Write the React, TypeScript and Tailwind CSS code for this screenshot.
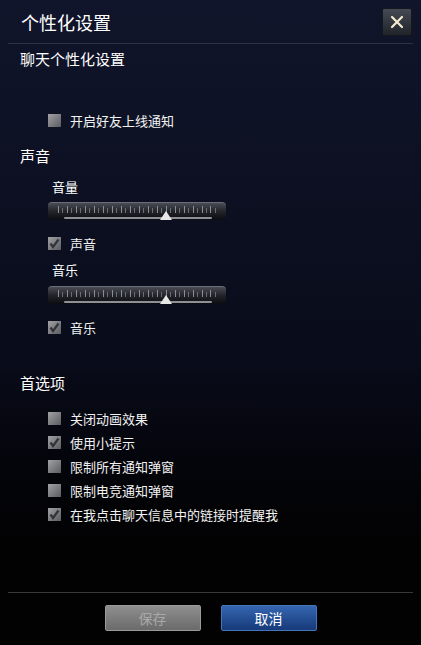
import React from "react";

const font = { fontFamily: '"Noto Sans CJK SC", "Noto Sans", sans-serif' };

function Check({ checked }: { checked?: boolean }) {
  return (
    <div className="relative w-[13px] h-[13px] bg-gradient-to-br from-[#a3a3a6] to-[#5b5c60] shrink-0">
      {checked && (
        <svg viewBox="0 0 13 13" className="absolute inset-0 w-[13px] h-[13px]">
          <path d="M2.5 6.5 L5 10 L10.5 2.5" fill="none" stroke="#33343a" strokeWidth="2.2" />
        </svg>
      )}
    </div>
  );
}

function CheckRow({ label, checked }: { label: string; checked?: boolean }) {
  return (
    <div className="h-[20px] flex items-center pl-[28px]">
      <Check checked={checked} />
      <span className="ml-[9px] text-[13px] text-[#f2f2f2] leading-none">{label}</span>
    </div>
  );
}

function Slider() {
  const ticks = Array.from({ length: 36 });
  return (
    <div className="ml-[28px] w-[178px] h-[18px] rounded-[4px] bg-gradient-to-b from-[#4a4d55] via-[#22242a] to-[#0b0c10] border-t border-[#6a6d75] relative">
      <div className="absolute left-[10px] right-[10px] top-[2px] h-[8px] flex justify-between items-end">
        {ticks.map((_, i) => (
          <div key={i} className={i % 2 === 0 ? "w-px h-[7px] bg-[#8a8d94]" : "w-px h-[5px] bg-[#6a6d74]"} />
        ))}
      </div>
      <div className="absolute left-[16px] right-[14px] top-[14px] h-[2px] bg-[#8d9096] rounded-full" />
      <svg viewBox="0 0 12 9" className="absolute left-[112px] top-[8px] w-[12px] h-[9px]">
        <path d="M6 0 L12 9 L0 9 Z" fill="#e6e6e6" />
      </svg>
    </div>
  );
}

export default function App() {
  return (
    <div
      style={font}
      className="w-[421px] h-[645px] flex flex-col bg-gradient-to-b from-[#11152b] from-0% via-[#090c1a] via-55% to-[#020203] to-85% overflow-hidden"
    >
      <div className="mx-[8px] h-[44px] border-b border-[#2c3144] flex items-center justify-between">
        <span className="pl-[13px] text-[18px] text-white leading-none">个性化设置</span>
        <div className="mr-[1px] w-[30px] h-[28px] rounded-[2px] bg-gradient-to-b from-[#454a55] to-[#202329] border border-[#15171d] flex items-center justify-center">
          <svg viewBox="0 0 14 14" className="w-[14px] h-[14px]">
            <path d="M2 2 L12 12 M12 2 L2 12" stroke="#f4ead0" strokeWidth="2.2" strokeLinecap="round" />
          </svg>
        </div>
      </div>

      <div className="pl-[20px] flex flex-col">
        <div className="mt-[4px] h-[20px] flex items-center text-[15px] text-white leading-none">聊天个性化设置</div>
        <div className="mt-[42px]">
          <CheckRow label="开启好友上线通知" />
        </div>
        <div className="mt-[15px] h-[20px] flex items-center text-[15px] text-white leading-none">声音</div>
        <div className="mt-[13px] h-[16px] flex items-center pl-[32px] text-[13px] text-white leading-none">音量</div>
        <div className="mt-[8px]">
          <Slider />
        </div>
        <div className="mt-[13px]">
          <CheckRow label="声音" checked />
        </div>
        <div className="mt-[8px] h-[16px] flex items-center pl-[32px] text-[13px] text-white leading-none">音乐</div>
        <div className="mt-[9px]">
          <Slider />
        </div>
        <div className="mt-[13px]">
          <CheckRow label="音乐" checked />
        </div>
        <div className="mt-[35px] h-[20px] flex items-center text-[15px] text-white leading-none">首选项</div>
        <div className="mt-[16px] flex flex-col gap-[4px]">
          <CheckRow label="关闭动画效果" />
          <CheckRow label="使用小提示" checked />
          <CheckRow label="限制所有通知弹窗" />
          <CheckRow label="限制电竞通知弹窗" />
          <CheckRow label="在我点击聊天信息中的链接时提醒我" checked />
        </div>
      </div>

      <div className="mt-auto mx-[8px] h-[53px] border-t border-[#38383a] flex justify-center gap-[20px] pt-[12px]">
        <div className="w-[96px] h-[26px] rounded-[2px] border border-[#9a9a9a] bg-gradient-to-b from-[#8e8e8e] to-[#6b6b6b] flex items-center justify-center text-[14px] text-[#a9a9a9] leading-none">
          保存
        </div>
        <div className="w-[96px] h-[26px] rounded-[2px] border border-[#4575bb] bg-gradient-to-b from-[#3566b0] to-[#173a7a] flex items-center justify-center text-[14px] text-white leading-none">
          取消
        </div>
      </div>
    </div>
  );
}
